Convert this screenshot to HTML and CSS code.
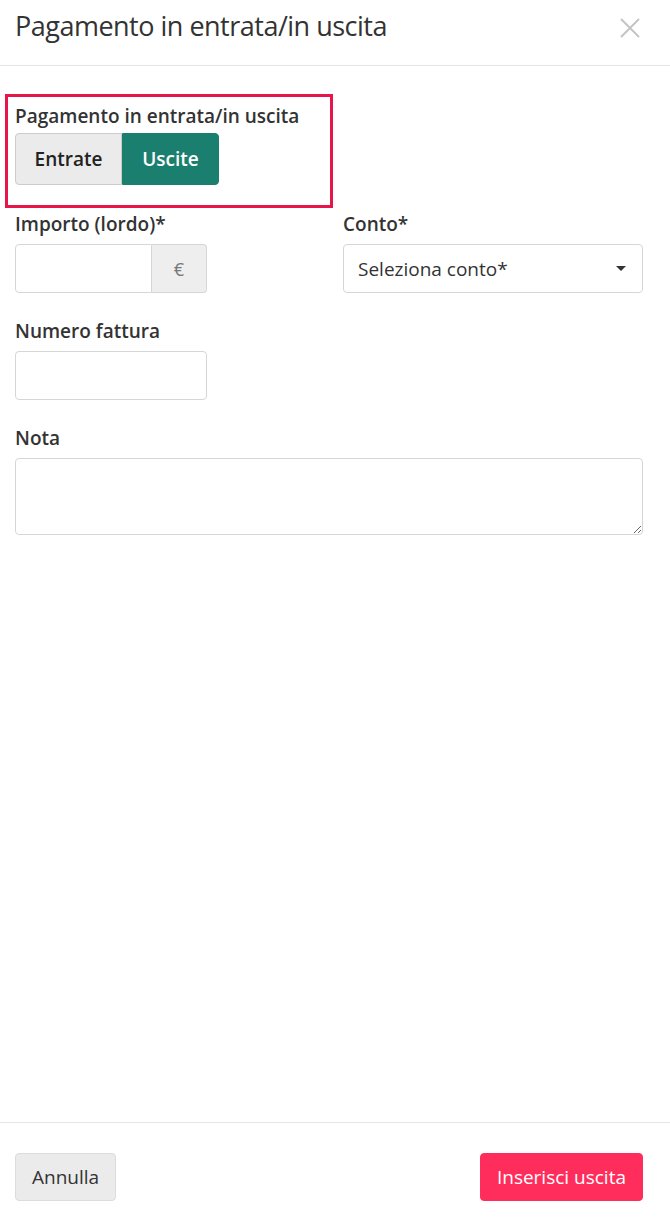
FILE: index.html
```html
<!DOCTYPE html>
<html lang="it">

<head>
    <meta charset="UTF-8">
    <meta name="viewport" content="width=device-width, initial-scale=1.0">
    <title>Pagamento in entrata/in uscita</title>
    <link rel="stylesheet" href="styles.css">
</head>

<body>
    <div class="modal">
        <header class="modal-header">
            <h1>Pagamento in entrata/in uscita</h1>
            <a href="#" class="close" aria-label="Chiudi">
                <svg width="22" height="22" viewBox="0 0 22 22">
                    <path d="M2 2 L20 20 M20 2 L2 20" stroke="#c4c4c4" stroke-width="2" fill="none" />
                </svg>
            </a>
        </header>

        <main class="modal-body">
            <div class="highlight">
                <label class="label">Pagamento in entrata/in uscita</label>
                <div class="toggle">
                    <button class="toggle-btn">Entrate</button>
                    <button class="toggle-btn active">Uscite</button>
                </div>
            </div>

            <div class="row">
                <div class="field">
                    <label class="label">Importo (lordo)*</label>
                    <div class="input-group">
                        <input type="text" class="input">
                        <span class="addon">€</span>
                    </div>
                </div>
                <div class="field wide">
                    <label class="label">Conto*</label>
                    <div class="select">
                        <span>Seleziona conto*</span>
                        <span class="caret"></span>
                    </div>
                </div>
            </div>

            <div class="field">
                <label class="label">Numero fattura</label>
                <input type="text" class="input short">
            </div>

            <div class="field">
                <label class="label">Nota</label>
                <textarea class="textarea"></textarea>
            </div>
        </main>

        <footer class="modal-footer">
            <button class="btn btn-default">Annulla</button>
            <button class="btn btn-primary">Inserisci uscita</button>
        </footer>
    </div>
</body>

</html>
```

FILE: styles.css
```css
* {
    padding: 0;
    margin: 0;
    box-sizing: border-box;
    font-family: "Open Sans", "Noto Sans", sans-serif;
}

body {
    background: #fff;
    color: #333;
}

.modal {
    min-height: 100vh;
    display: flex;
    flex-direction: column;
}

.modal-header {
    height: 66px;
    display: flex;
    justify-content: space-between;
    align-items: flex-start;
    padding: 7px 29px 0 15px;
    border-bottom: 1px solid #e5e5e5;
}

.modal-header h1 {
    font-size: 27px;
    line-height: 37px;
    font-weight: 400;
    color: #333;
    letter-spacing: -0.5px;
}

.close {
    display: block;
    height: 22px;
    margin-top: 10px;
}

.modal-body {
    flex: 1;
    padding: 28px 27px 0 15px;
    display: flex;
    flex-direction: column;
}

.highlight {
    margin: 0 0 0 -10px;
    width: 328px;
    padding: 7px 0 20px 7px;
    border: 3px solid #e8154b;
}

.label {
    display: block;
    font-size: 19px;
    font-weight: 600;
    color: #333;
    line-height: 24px;
    margin-bottom: 8px;
}

.highlight .label {
    margin-bottom: 5px;
}

.toggle {
    display: flex;
}

.toggle-btn {
    height: 52px;
    width: 107px;
    font-size: 19px;
    font-weight: 600;
    border: 1px solid #ccc;
    background: #ebebeb;
    color: #222;
    border-radius: 4px 0 0 4px;
}

.toggle-btn.active {
    background: #1b7f6f;
    border-color: #1b7f6f;
    color: #fff;
    border-radius: 0 4px 4px 0;
    width: 97px;
}

.row {
    display: flex;
    gap: 136px;
    margin-top: 4px;
}

.field {
    margin-bottom: 26px;
}

.field.wide {
    flex: 1;
}

.input-group {
    display: flex;
    width: 192px;
    height: 49px;
}

.input {
    width: 137px;
    height: 49px;
    border: 1px solid #d6d6d6;
    border-radius: 4px 0 0 4px;
    font-size: 19px;
    padding: 0 14px;
}

.input.short {
    width: 192px;
    border-radius: 4px;
}

.addon {
    flex: 1;
    display: flex;
    align-items: center;
    justify-content: center;
    background: #eee;
    border: 1px solid #d6d6d6;
    border-left: 0;
    border-radius: 0 4px 4px 0;
    color: #777;
    font-size: 18px;
}

.select {
    height: 49px;
    border: 1px solid #d6d6d6;
    border-radius: 4px;
    display: flex;
    align-items: center;
    justify-content: space-between;
    padding: 0 16px 0 14px;
    font-size: 19px;
    color: #333;
}

.caret {
    width: 0;
    height: 0;
    border-left: 5px solid transparent;
    border-right: 5px solid transparent;
    border-top: 5px solid #333;
}

.textarea {
    display: block;
    width: 100%;
    height: 77px;
    border: 1px solid #d6d6d6;
    border-radius: 4px;
    font-size: 19px;
    padding: 8px 14px;
    resize: vertical;
}

.modal-footer {
    display: flex;
    justify-content: space-between;
    align-items: center;
    height: 101px;
    padding: 8px 27px 0 15px;
    border-top: 1px solid #e5e5e5;
}

.btn {
    height: 48px;
    border-radius: 4px;
    font-size: 19px;
    font-weight: 400;
    padding: 0 16px;
    border: 1px solid transparent;
}

.btn-default {
    background: #ebebeb;
    border-color: #dcdcdc;
    color: #333;
}

.btn-primary {
    background: #ff2d5c;
    border-color: #ff2d5c;
    color: #fff;
}
```
